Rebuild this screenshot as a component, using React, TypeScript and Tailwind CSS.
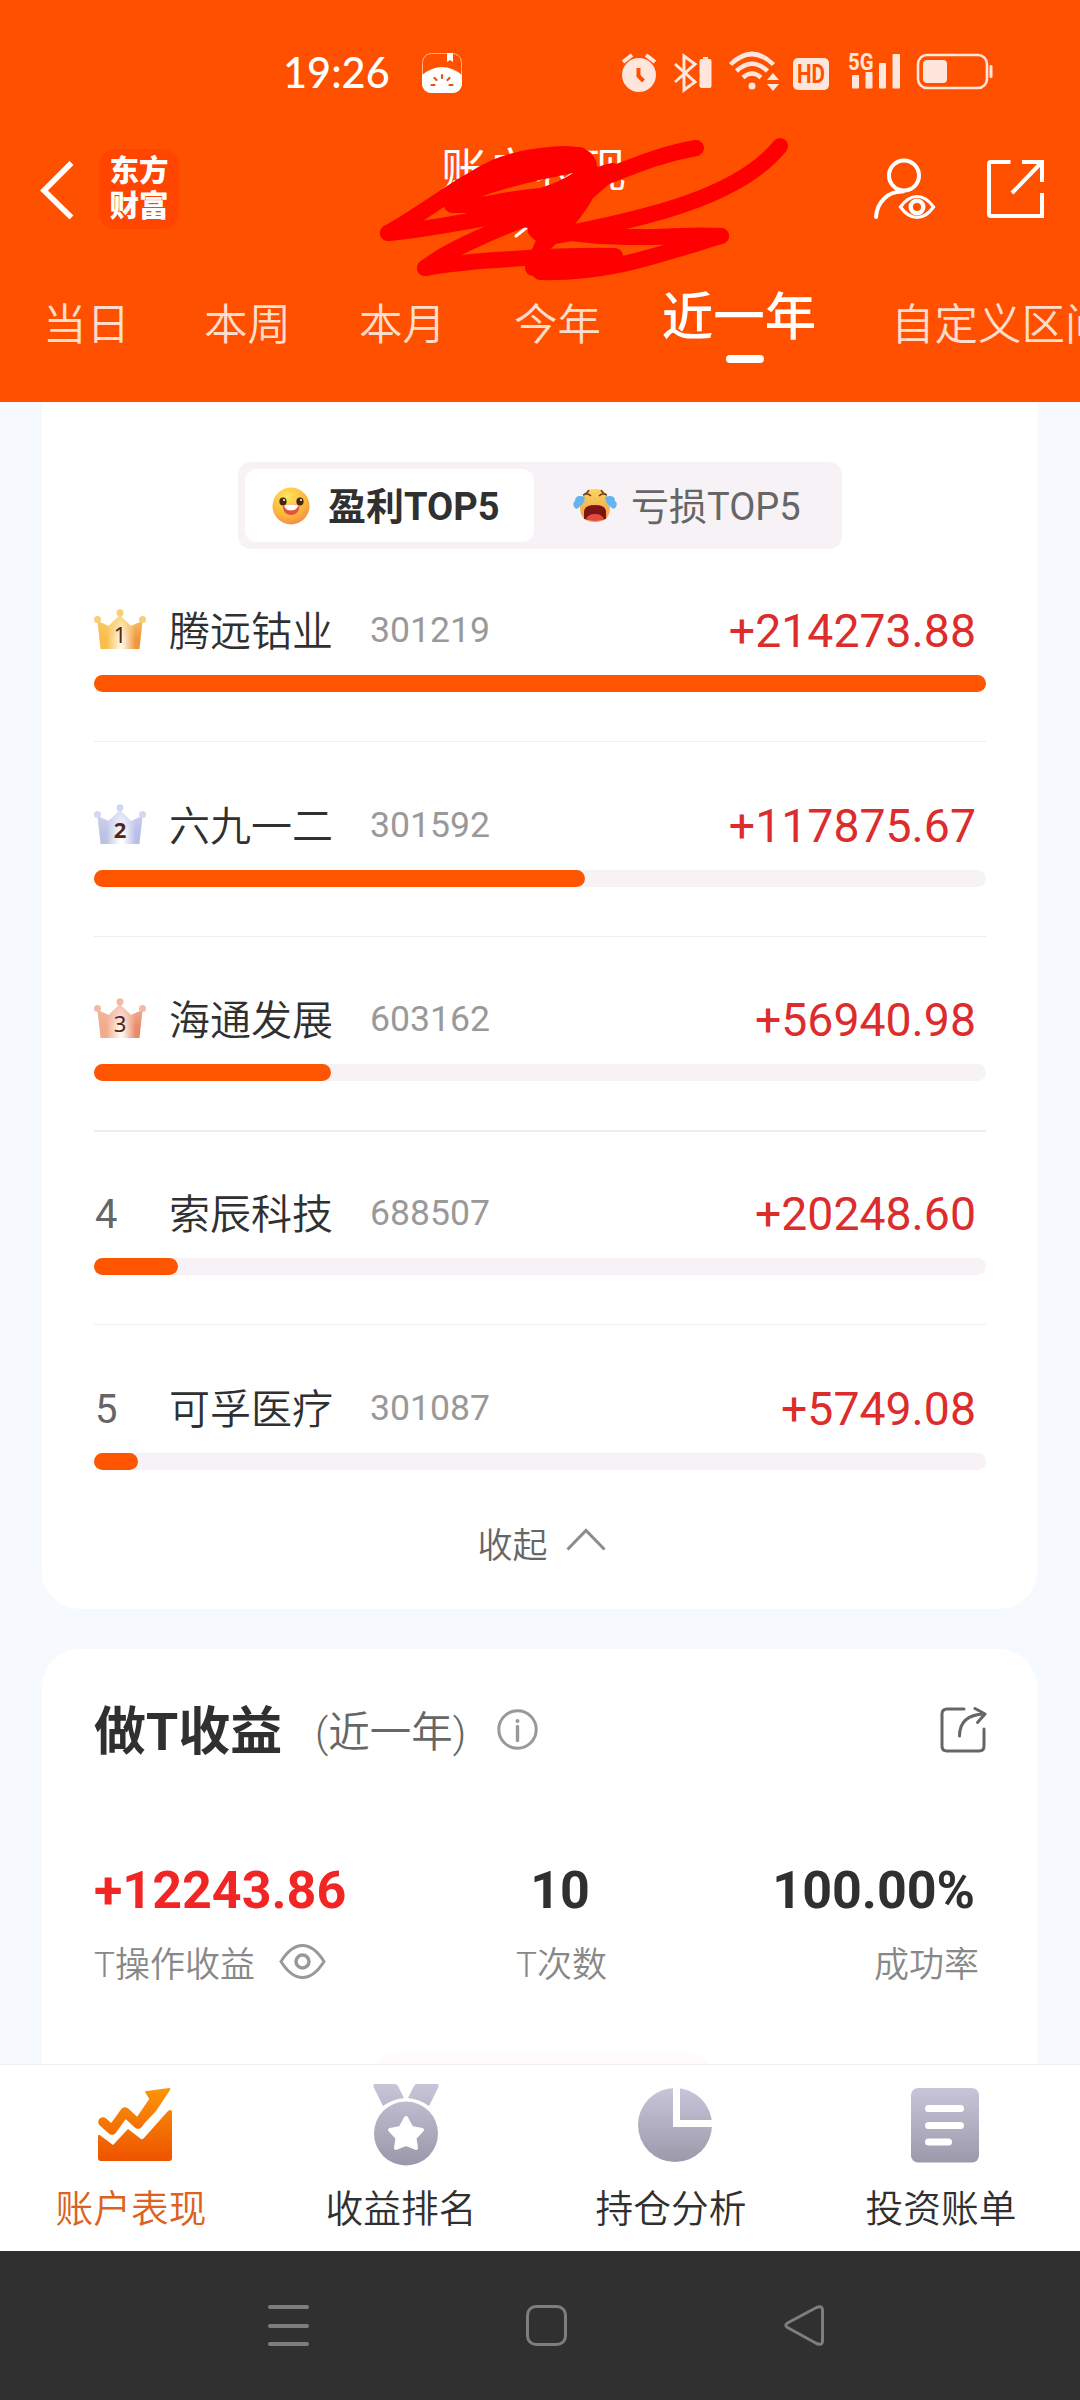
import React from 'react';

const SANS = "font-['Roboto','Noto_Sans_CJK_SC',sans-serif]";

const tabs = ['当日', '本周', '本月', '今年'];

const stocks = [
  { rank: 1, name: '腾远钴业', code: '301219', gain: '+214273.88', width: 892, pad: 'pt-[52px]' },
  { rank: 2, name: '六九一二', code: '301592', gain: '+117875.67', width: 491, pad: 'pt-[54px]' },
  { rank: 3, name: '海通发展', code: '603162', gain: '+56940.98', width: 237, pad: 'pt-[53px]' },
  { rank: 4, name: '索辰科技', code: '688507', gain: '+20248.60', width: 84, pad: 'pt-[52px]' },
  { rank: 5, name: '可孚医疗', code: '301087', gain: '+5749.08', width: 44, pad: 'pt-[54px]' },
];

const crownColors: Record<number, string[]> = {
  1: ['#f8bd4a', '#fff6e0', '#f0953a', '#f8cf74'],
  2: ['#bcc3e2', '#ffffff', '#b9bdea', '#d3d7f2'],
  3: ['#f2ab8b', '#fff6f1', '#e88a68', '#f3b9a5'],
};

function StatusBar() {
  return (
    <div className="flex h-[120px] items-start pl-[283px] pt-[51px]">
      <span className="w-[139px] font-['Lato'] text-[41.5px] font-medium leading-[42px] text-white">19:26</span>
      <svg className="mt-[2px]" width="40" height="40" viewBox="0 0 40 40">
        <rect x=".5" y=".5" width="39" height="39" rx="9" fill="none" stroke="#ffb48c" strokeWidth="1" />
        <path d="M0 22Q20 6 40 22V31a9 9 0 0 1-9 9H9a9 9 0 0 1-9-9Z" fill="#fff" />
        <path d="M25 0h6v9l-3-2-3 2Z" fill="#fff" />
        <g stroke="#e8501a" strokeWidth="2.2" strokeLinecap="round">
          <path d="M20 22v3M12.500 25l2 2M27.500 25l-2 2M9.500 32h3M27.500 32h3" />
        </g>
      </svg>
      <svg className="-mt-[11px] ml-[158px]" width="380" height="60" viewBox="620 40 380 60" fill="#ffe6dc">
        <circle cx="639" cy="75" r="17" />
        <path d="M623 62l9-7M655 62l-9-7" stroke="#ffe6dc" strokeWidth="4" />
        <path d="M638.500 68v8l5 5" stroke="#ff5000" strokeWidth="4" fill="none" />
        <path d="M675 64l20 18-11 8V56l11 8-20 18" fill="none" stroke="#ffe6dc" strokeWidth="3" />
        <path d="M703 57h5v2h1.500a2 2 0 0 1 2 2v25a2 2 0 0 1-2 2h-8a2 2 0 0 1-2-2V61a2 2 0 0 1 2-2h1.500Z" />
        <g fill="none" stroke="#ffe6dc" strokeWidth="4.500">
          <path d="M730.500 64.500q21.500-21 43 0M736.500 71q15.500-14.500 31 0M743 77.500q9-8 18 0" />
        </g>
        <circle cx="752" cy="86" r="3.500" />
        <path d="M773 73l6 7h-12ZM773 91l6-7h-12Z" />
        <rect x="793" y="58" width="36" height="32" rx="5" />
        <text x="811" y="83" textAnchor="middle" fontFamily="Roboto" fontWeight="700" fontSize="25" textLength="28" lengthAdjust="spacingAndGlyphs" fill="#ff5000">HD</text>
        <text x="848" y="69.500" fontFamily="Roboto" fontWeight="700" fontSize="23.500" textLength="25.500" lengthAdjust="spacingAndGlyphs">5G</text>
        <rect x="852" y="75" width="7" height="13.500" rx="1" />
        <rect x="865.500" y="72" width="7" height="16.500" rx="1" />
        <rect x="879" y="63" width="7" height="25.500" rx="1" />
        <rect x="892.500" y="54" width="7.500" height="34.500" rx="1" />
        <rect x="918" y="55" width="69" height="33" rx="9" fill="none" stroke="#ffe6dc" strokeWidth="2.600" />
        <rect x="923" y="60" width="24" height="23" rx="4" />
        <rect x="989.500" y="65" width="3" height="13" rx="1.500" />
      </svg>
    </div>
  );
}

function Scribble() {
  return (
    <svg className="absolute left-[370px] top-[130px]" width="430" height="160" viewBox="370 130 430 160" fill="none" stroke="#ff0000" strokeWidth="16" strokeLinecap="round" strokeLinejoin="round">
      <path d="M516 236l10-8" stroke="#fff" strokeWidth="3" />
      <path d="M388 233C420 215 440 199 465 184S530 156 580 155" />
      <path d="M388 233C430 230 500 214 560 206" />
      <path d="M452 205C490 206 540 199 580 186S650 156 696 148" />
      <path d="M585 184Q600 173 613 171" />
      <path d="M780 146C740 196 650 218 550 237" />
      <path d="M425 268C450 248 500 228 560 205" />
      <path d="M425 268C470 260 560 255 615 256" />
      <path d="M721 236C680 233 640 242 570 233" />
      <path d="M721 236C660 254 610 274 540 272" />
      <path d="M533 268L545 240" />
      <path
        d="M440 196Q465 172 492 160Q516 150 540 148Q580 142 591 153Q597 160 597 166L614 180L593 198Q588 208 576 223L557 243L545 254L530 254L536 241Q526 234 528 228L478 219L455 208ZM474 199Q505 188 540 180L573 173Q560 182 540 188Q500 192 474 199Z"
        fill="#ff0000"
        fillRule="evenodd"
        stroke="none"
      />
    </svg>
  );
}

function TitleBar() {
  return (
    <div className="flex h-[140px] items-start">
      <svg className="ml-[40px] mt-[41px]" width="34" height="58" viewBox="0 0 34 58" fill="none" stroke="#fff" strokeWidth="5.500">
        <path d="M31.500 2L4 29.500L31.500 56.500" />
      </svg>
      <div className="ml-[25px] mt-[29px] flex h-[80px] w-[80px] flex-col items-center justify-center rounded-[16px] bg-[#ff4500] text-[29.5px] font-black leading-[35px] text-white">
        <span>东方</span>
        <span>财富</span>
      </div>
      <div className="ml-[262px] mt-[19px] w-[201px] text-[46.3px] leading-[64px] text-white">账户表现</div>
      <svg className="ml-[230px] mt-[36px]" width="64" height="66" viewBox="872 156 64 66" fill="none" stroke="#fff" strokeWidth="4" strokeLinecap="round">
        <circle cx="904" cy="175.500" r="15" />
        <path d="M876 217C877 202 888 191 903 191.500" />
        <path d="M900.500 207Q908 196.500 917 196.500T933.500 207Q926 217.500 917 217.500T900.500 207Z" strokeWidth="3.200" />
        <circle cx="917" cy="207" r="6.300" strokeWidth="4.500" />
      </svg>
      <svg className="ml-[49px] mt-[38px]" width="62" height="64" viewBox="985 158 62 64" fill="none" stroke="#fff" strokeWidth="4">
        <path d="M1010.500 162H991q-2 0-2 2v50q0 2 2 2h51v-23M1022 162h20v20M1041 163l-29 30" />
      </svg>
    </div>
  );
}

function PeriodTabs() {
  return (
    <div className="flex h-[142px] items-start overflow-hidden whitespace-nowrap pl-[43px] text-[43.5px] font-[350] leading-[60px] text-[#ffdccb]">
      <span className="mr-[75px] mt-[36px] w-[86px] shrink-0">{tabs[0]}</span>
      {tabs.slice(1).map((t) => (
        <span key={t} className="mr-[69px] mt-[36px] w-[86px] shrink-0">{t}</span>
      ))}
      <div className="-ml-[7px] mt-[26px] flex w-[154px] shrink-0 flex-col items-center">
        <span className="text-[51.5px] font-medium leading-[64px] text-white">近一年</span>
        <span className="ml-[12px] mt-[5px] h-[8px] w-[38px] rounded-full bg-white" />
      </div>
      <span className="ml-[75px] mt-[36px] shrink-0">自定义区间</span>
    </div>
  );
}

function HappyFace() {
  return (
    <svg width="38" height="38" viewBox="0 0 38 38">
      <defs>
        <radialGradient id="happy" cx=".4" cy=".25" r=".85">
          <stop offset="0" stopColor="#ffe45c" />
          <stop offset=".6" stopColor="#fbb63c" />
          <stop offset="1" stopColor="#f0814f" />
        </radialGradient>
      </defs>
      <circle cx="19" cy="19" r="18.500" fill="url(#happy)" />
      <ellipse cx="11" cy="14.500" rx="3.600" ry="4" fill="#45260c" />
      <ellipse cx="28" cy="14.500" rx="3.600" ry="4" fill="#45260c" />
      <circle cx="12" cy="13" r="1" fill="#fff" />
      <circle cx="29" cy="13" r="1" fill="#fff" />
      <path d="M11 18.500Q19 16.500 27.500 18.500Q27 28 19 28T11 18.500Z" fill="#e0533a" />
      <path d="M12 18.500Q19 16.500 26.500 18.500Q25 23.500 19 23.500T12 18.500Z" fill="#fff" />
    </svg>
  );
}

function CryingFace() {
  return (
    <svg width="44" height="36" viewBox="0 0 44 36">
      <defs>
        <linearGradient id="cry" x1="0" y1="0" x2="0" y2="1">
          <stop offset="0" stopColor="#fbd65c" />
          <stop offset="1" stopColor="#f09a50" />
        </linearGradient>
      </defs>
      <path d="M22 1C33 1 36 9 37 19C37 28 33 34 22 34S7 28 7 19C8 9 11 1 22 1Z" fill="url(#cry)" />
      <path d="M10 7q4-1 6-5M18 8q-3-3-7-2M34 7q-4-1-6-5M26 8q3-3 7-2" stroke="#6d3c20" strokeWidth="1.600" fill="none" />
      <path d="M12 9Q2 6 2 13Q-1 15 1 19Q4 23 7 18Q11 17 12 9Z" fill="#64b4f0" />
      <path d="M32 9Q42 6 42 13Q45 15 43 19Q40 23 37 18Q33 17 32 9Z" fill="#64b4f0" />
      <path d="M11 24Q11 17 22 17T33 24V31Q28 32 22 32T11 31Z" fill="#7c1512" />
      <path d="M13 31Q15 26 22 26T31 31Q26 33 22 33T13 31Z" fill="#e24a42" />
    </svg>
  );
}

function Toggle() {
  return (
    <div className="ml-[196px] flex h-[87px] w-[604px] items-center rounded-[13px] bg-[#f7f2f6] pl-[7px] text-[38px] leading-[60px]">
      <div className="flex h-[73px] w-[289px] items-center rounded-[12px] bg-white pl-[27px]">
        <HappyFace />
        <span className="ml-[18px] pt-[3px] font-bold text-[#303030]">盈利TOP5</span>
      </div>
      <div className="flex items-center pl-[39px]">
        <CryingFace />
        <span className="ml-[14px] pt-[3px] text-[#666]">亏损TOP5</span>
      </div>
    </div>
  );
}

function Crown({ rank }: { rank: number }) {
  const [left, mid, right, dot] = crownColors[rank];
  const id = 'crown' + rank;
  return (
    <svg width="52" height="42" viewBox="0 0 52 42">
      <defs>
        <linearGradient id={id}>
          <stop offset="0" stopColor={left} />
          <stop offset=".2" stopColor={left} />
          <stop offset=".5" stopColor={mid} />
          <stop offset=".56" stopColor={mid} />
          <stop offset=".85" stopColor={right} />
        </linearGradient>
        <linearGradient id={id + 'top'} x1="0" y1="0" x2="0" y2="1">
          <stop offset="0" stopColor={dot} stopOpacity=".9" />
          <stop offset=".7" stopColor={dot} stopOpacity="0" />
        </linearGradient>
      </defs>
      <path d="M3.500 12L14.500 17L26 6L37 17L48.500 12L45.500 40H6.500Z" fill={`url(#${id})`} />
      <path d="M3.500 12L14.500 17L26 6L37 17L48.500 12L45.500 40H6.500Z" fill={`url(#${id}top)`} />
      <circle cx="26" cy="3.800" r="3.500" fill={dot} />
      <circle cx="3.500" cy="10.500" r="3.500" fill={dot} />
      <circle cx="48.500" cy="10.500" r="3.500" fill={dot} />
      <text x="26" y="33.500" textAnchor="middle" fontFamily={rank === 2 ? 'Open Sans' : 'Noto Sans'} fontWeight={rank === 2 ? 700 : 400} fontSize="22" fill="#54241b">{rank}</text>
    </svg>
  );
}

function StockRow({ s, last }: { s: (typeof stocks)[0]; last: boolean }) {
  return (
    <div className={'flex flex-col ' + s.pad + ' ' + (last ? '' : s.rank === 3 ? 'border-b-2 border-[#eeeef0]' : 'border-b border-[#eeeef0]')}>
      <div className="flex h-[60px] items-center">
        <div className="flex w-[75px] items-center pl-px text-[40px] text-[#666]">
          {s.rank < 4 ? <div className="-ml-px -mt-[3px]"><Crown rank={s.rank} /></div> : <span className="pt-[2px]">{s.rank}</span>}
        </div>
        <span className="w-[201px] pt-[2px] text-[41px] font-[350] leading-[60px] text-[#303030]">{s.name}</span>
        <span className="grow pb-[2px] text-[35.6px] leading-[60px] text-[#999]">{s.code}</span>
        <span className="mr-[10px] text-[46.4px] leading-[60px] text-[#dc2c2c]">{s.gain}</span>
      </div>
      <div className="mt-[14px] h-[17px] rounded-full bg-[#f7f2f6]">
        <div className="h-full rounded-full bg-[#ff5500]" style={{ width: s.width }} />
      </div>
      {!last && <div className="h-[49px]" />}
    </div>
  );
}

function RankCard() {
  return (
    <section className="h-[1207px] rounded-b-[38px] bg-white pl-[52px] pr-[51px] pt-[60px]">
      <div className="-ml-[52px]"><Toggle /></div>
      {stocks.map((s, i) => (
        <StockRow key={s.code} s={s} last={i === 4} />
      ))}
      <div className="mt-[44px] flex items-center justify-center pl-[3px] text-[35px] font-[350] leading-[60px] text-[#666]">
        <span className="pt-[3px]">收起</span>
        <svg className="-mt-[11px] ml-[18px]" width="40" height="24" viewBox="0 0 40 24" fill="none" stroke="#8c8c8c" strokeWidth="3">
          <path d="M1.500 21.500L20 2.500L38.500 21.500" />
        </svg>
      </div>
    </section>
  );
}

function TradeCard() {
  return (
    <section className="mt-[40px] flex h-[415px] flex-col rounded-t-[38px] bg-white pl-[52px] pr-[50px]">
      <div className="mt-[43px] flex h-[76px] items-center">
        <h2 className="w-[188px] whitespace-nowrap pt-[5px] text-[52px] font-bold leading-[76px] text-[#303030]">做T收益</h2>
        <span className="ml-[33px] w-[152px] shrink-0 whitespace-nowrap pt-[5px] text-[41.5px] font-[350] leading-[76px] text-[#666]">(近一年)</span>
        <svg className="-mt-px ml-[30px]" width="41" height="41" viewBox="0 0 41 41" fill="none" stroke="#999" strokeWidth="3">
          <circle cx="20.500" cy="20.500" r="18.700" />
          <path d="M20.500 17.500v14" strokeWidth="3.400" strokeLinecap="round" />
          <circle cx="20.500" cy="12" r="2" fill="#999" stroke="none" />
        </svg>
        <svg className="ml-auto" width="47" height="48" viewBox="0 0 47 48" fill="none" stroke="#666" strokeWidth="3" strokeLinecap="round" strokeLinejoin="round">
          <path d="M24 3H7Q2 3 2 8V40Q2 45 7 45H39Q44 45 44 40V23" />
          <path d="M19.500 30Q19.500 9 44 8M35 2.500L45 8L37.500 16.500" />
        </svg>
      </div>
      <div className="mt-[93px] flex justify-between pr-[12px] text-[52px] font-bold leading-[60px] text-[#303030]">
        <span className="w-[290px] text-[#f22525]">+12243.86</span>
        <span className="w-[300px] pl-[41px] text-center">10</span>
        <span className="w-[280px] text-right">100.00%</span>
      </div>
      <div className="mt-[14px] flex justify-between pr-[8px] text-[35px] font-[350] leading-[50px] text-[#888]">
        <span className="flex w-[290px] items-center">
          <span className="pt-[6px]">T操作收益</span>
          <svg className="-mt-[3px] ml-[24px]" width="47" height="35" viewBox="0 0 47 35" fill="none" stroke="#999" strokeWidth="3">
            <path d="M2 17.500Q12 1.500 23.500 1.500T45 17.500Q35 33.500 23.500 33.500T2 17.500Z" />
            <circle cx="23.500" cy="17.500" r="6.500" strokeWidth="3.500" />
          </svg>
        </span>
        <span className="w-[300px] pl-[40px] pt-[6px] text-center">T次数</span>
        <span className="w-[280px] pt-[6px] text-right">成功率</span>
      </div>
      <div className="mx-auto mt-auto h-[11px] w-[364px] overflow-hidden">
        <div className="h-[80px] rounded-[40px] bg-[#fffafd]" />
      </div>
    </section>
  );
}

function Shade() {
  return (
    <svg className="absolute h-0 w-0">
      <defs>
        <linearGradient id="shade" x1="0" y1="0" x2="0" y2="1">
          <stop offset="0" stopColor="#c9c5d9" />
          <stop offset="1" stopColor="#9c99ab" />
        </linearGradient>
        <linearGradient id="glow" x1="0" y1="0" x2="0" y2="74" gradientUnits="userSpaceOnUse">
          <stop offset="0" stopColor="#fb9508" />
          <stop offset="1" stopColor="#ee5200" />
        </linearGradient>
        <linearGradient id="medal" x1="0" y1="0" x2="0" y2="82" gradientUnits="userSpaceOnUse">
          <stop offset="0" stopColor="#c9c5d9" />
          <stop offset="1" stopColor="#9a97a8" />
        </linearGradient>
      </defs>
    </svg>
  );
}

const navItems = [
  {
    label: '账户表现',
    icon: (
      <svg width="74" height="82" viewBox="0 -4 74 82">
        <path d="M5 34L14 42L27 24L40 36L57 11" fill="none" stroke="url(#glow)" strokeWidth="9.500" strokeLinecap="round" strokeLinejoin="round" />
        <path d="M47 4Q47 3 49 3L71 0Q73 0 72 2L58 23L41 41L36 34L52 12Z" fill="url(#glow)" />
        <path d="M0 49Q0 45 3 48L15 57L30 41L43 51Q44 52 46 50L70 23Q74 20 74 25V70Q74 73 71 73H3Q0 73 0 70Z" fill="url(#glow)" />
      </svg>
    ),
  },
  {
    label: '收益排名',
    icon: (
      <svg className="ml-[2px]" width="66" height="82" viewBox="0 0 66 82" fill="url(#medal)">
        <path d="M2 0H22Q24 0 25 2L31 14Q20 15 10 22L.5 3Q0 0 2 0ZM64 0H44Q42 0 41 2L35 14Q46 15 56 22L65.500 3Q66 0 64 0Z" />
        <circle cx="33" cy="49.500" r="32" />
        <path d="M33 34L38.500 44L49 46L41.500 54L43 64L33 60L23 64L24.500 54L17 46L27.500 44Z" fill="#fff" stroke="#fff" strokeWidth="4" strokeLinejoin="round" />
      </svg>
    ),
  },
  {
    label: '持仓分析',
    icon: (
      <svg width="74" height="82" viewBox="0 -4 74 82">
        <mask id="slice">
          <rect width="74" height="74" fill="#fff" />
          <path d="M38.500 -1V35.500H75" fill="none" stroke="#000" strokeWidth="7" />
        </mask>
        <circle cx="37" cy="37" r="37" fill="url(#shade)" mask="url(#slice)" />
      </svg>
    ),
  },
  {
    label: '投资账单',
    icon: (
      <svg width="68" height="82" viewBox="0 -4 68 82">
        <rect width="68" height="74.500" rx="7" fill="url(#shade)" />
        <path d="M17.500 20.500h32M17.500 37.500h32M17.500 54h20" stroke="#fff" strokeWidth="7" strokeLinecap="round" />
      </svg>
    ),
  },
];

function BottomNav() {
  return (
    <nav className="grid h-[187px] grid-cols-4 border-t border-[#eeeef2] bg-white">
      <Shade />
      {navItems.map((n, i) => (
        <div key={n.label} className="flex flex-col items-center pt-[19px]">
          {n.icon}
          <span className={'-ml-[8px] mt-[15px] text-[37.7px] font-[350] leading-[56px] ' + (i === 0 ? 'text-[#db6220]' : 'text-[#303030]')}>{n.label}</span>
        </div>
      ))}
    </nav>
  );
}

function SystemBar() {
  return (
    <div className="flex h-[149px] items-start bg-[#303030] pt-[53px]">
      <div className="ml-[268px] mt-px flex w-[41px] flex-col gap-[14.5px]">
        <span className="h-[4px] rounded-sm bg-[#7e7d80]" />
        <span className="h-[4px] rounded-sm bg-[#7e7d80]" />
        <span className="h-[4px] rounded-sm bg-[#7e7d80]" />
      </div>
      <div className="ml-[217px] mt-px h-[41px] w-[41px] rounded-[10px] border-[3px] border-[#7e7d80]" />
      <svg className="ml-[217px] mt-px" width="41" height="41" viewBox="0 0 41 41" fill="none" stroke="#7e7d80" strokeWidth="3" strokeLinejoin="round">
        <path d="M3.500 18L32.500 2.500Q38.500 0 38.500 5V36Q38.500 41 32.500 38.500L3.500 22.500Q0 20.300 3.500 18Z" />
      </svg>
    </div>
  );
}

export default function App() {
  return (
    <div className={'flex h-[2400px] w-[1080px] flex-col overflow-hidden bg-[#f6faff] ' + SANS}>
      <header className="relative h-[402px] bg-[#ff5000]">
        <StatusBar />
        <TitleBar />
        <PeriodTabs />
        <Scribble />
      </header>
      <main className="h-[1662px] px-[42px]">
        <div className="w-[995px]">
          <RankCard />
          <TradeCard />
        </div>
      </main>
      <BottomNav />
      <SystemBar />
    </div>
  );
}
